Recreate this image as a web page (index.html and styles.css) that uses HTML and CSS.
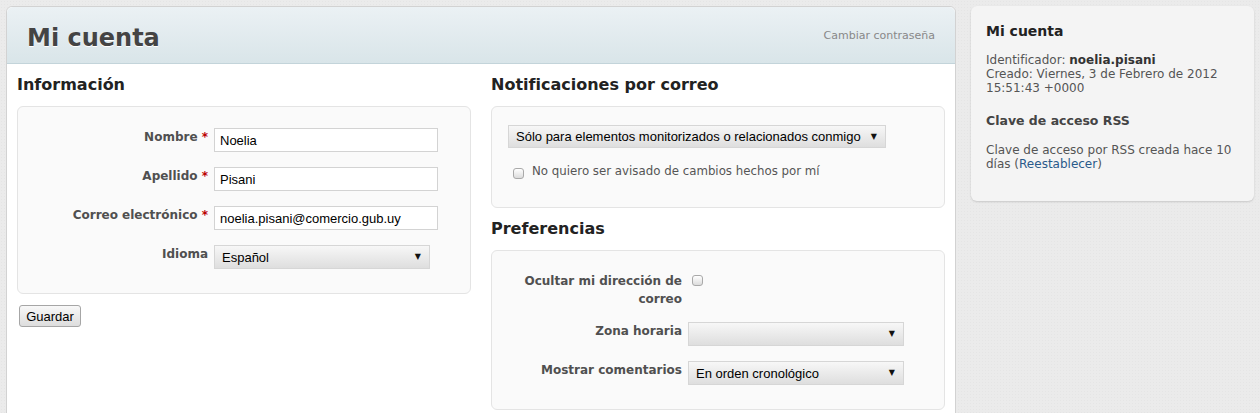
FILE: index.html
```html
<!DOCTYPE html>
<html lang="es">
<head>
    <meta charset="UTF-8">
    <meta name="viewport" content="width=device-width, initial-scale=1.0">
    <title>Mi cuenta</title>
    <link rel="stylesheet" href="styles.css">
</head>
<body>

<div class="page">
    <div class="main">
        <div class="main-header">
            <h2>Mi cuenta</h2>
            <a href="#" class="contextual">Cambiar contraseña</a>
        </div>

        <form class="account-form">
            <div class="col">
                <h3>Información</h3>
                <div class="box tabular">
                    <div class="row">
                        <label>Nombre <span class="required">*</span></label>
                        <input type="text" value="Noelia">
                    </div>
                    <div class="row">
                        <label>Apellido <span class="required">*</span></label>
                        <input type="text" value="Pisani">
                    </div>
                    <div class="row">
                        <label>Correo electrónico <span class="required">*</span></label>
                        <input type="text" value="noelia.pisani@comercio.gub.uy">
                    </div>
                    <div class="row">
                        <label>Idioma</label>
                        <span class="select">
                            <select>
                                <option>Español</option>
                            </select>
                        </span>
                    </div>
                </div>
                <button type="button" class="save-btn">Guardar</button>
            </div>

            <div class="col">
                <h3>Notificaciones por correo</h3>
                <div class="box notify">
                    <span class="select wide">
                        <select>
                            <option>Sólo para elementos monitorizados o relacionados conmigo</option>
                        </select>
                    </span>
                    <label class="check">
                        <input type="checkbox"> No quiero ser avisado de cambios hechos por mí
                    </label>
                </div>

                <h3>Preferencias</h3>
                <div class="box tabular">
                    <div class="row tall">
                        <label>Ocultar mi dirección de correo</label>
                        <input type="checkbox">
                    </div>
                    <div class="row">
                        <label>Zona horaria</label>
                        <span class="select">
                            <select>
                                <option></option>
                            </select>
                        </span>
                    </div>
                    <div class="row">
                        <label>Mostrar comentarios</label>
                        <span class="select">
                            <select>
                                <option>En orden cronológico</option>
                            </select>
                        </span>
                    </div>
                </div>
            </div>
        </form>
    </div>

    <div class="sidebar">
        <h3>Mi cuenta</h3>
        <p>Identificador: <strong>noelia.pisani</strong><br>
           Creado: Viernes, 3 de Febrero de 2012 15:51:43 +0000</p>

        <h4>Clave de acceso RSS</h4>
        <p>Clave de acceso por RSS creada hace 10 días (<a href="#">Reestablecer</a>)</p>
    </div>
</div>

</body>
</html>
```

FILE: styles.css
```css
body {
    margin: 0;
    font-family: 'DejaVu Sans', Verdana, sans-serif;
    font-size: 12px;
    color: #555;
    background-color: #ebebeb;
    background-image: radial-gradient(rgba(0, 0, 0, 0.025) 1px, transparent 1px);
    background-size: 3px 3px;
    overflow: hidden;
}

.page {
    display: flex;
    align-items: flex-start;
    gap: 15px;
    padding: 6px;
}

.main {
    width: 948px;
    min-height: 430px;
    background: #fff;
    border: 1px solid #d2d2d2;
    border-radius: 6px 6px 0 0;
}

.main-header {
    display: flex;
    justify-content: space-between;
    align-items: flex-start;
    height: 40px;
    padding: 16px 20px 0;
    background: linear-gradient(#ebf1f4, #d9e5e9);
    border-bottom: 1px solid #c3d4da;
    border-radius: 6px 6px 0 0;
}

.main-header h2 {
    margin: 0;
    font-size: 24px;
    line-height: 30px;
    color: #444;
    text-shadow: 0 1px 0 #fff;
}

.contextual {
    margin-top: 6px;
    font-size: 11px;
    line-height: 14px;
    color: #888;
    text-decoration: none;
}

.account-form {
    display: grid;
    grid-template-columns: 454px 454px;
    column-gap: 20px;
    padding: 0 10px 20px;
}

h3 {
    margin: 11px 0 11px;
    font-size: 16px;
    line-height: 20px;
    color: #222;
}

.box {
    background: #fafafa;
    border: 1px solid #e4e4e4;
    border-radius: 6px;
}

.tabular {
    padding: 21px 0 24px;
}

.row {
    display: flex;
    align-items: flex-start;
    margin-bottom: 15px;
}

.row.tall {
    margin-bottom: 14px;
}

.row:last-child {
    margin-bottom: 0;
}

.row label {
    width: 190px;
    margin-right: 6px;
    text-align: right;
    font-weight: bold;
    line-height: 18px;
    color: #505050;
}

.required {
    color: #bb0000;
}

input[type="text"] {
    box-sizing: border-box;
    width: 224px;
    height: 24px;
    padding: 0 5px;
    border: 1px solid #d3d3d3;
    background: #fff;
    font-family: 'Liberation Sans', Arial, sans-serif;
    font-size: 13px;
    color: #000;
}

.select {
    position: relative;
    display: inline-block;
    width: 216px;
}

.select select {
    appearance: none;
    box-sizing: border-box;
    width: 100%;
    height: 24px;
    padding: 0 20px 0 7px;
    border: 1px solid #d6d6d6;
    border-radius: 0;
    background: linear-gradient(#f7f7f7, #dedede);
    font-family: 'Liberation Sans', Arial, sans-serif;
    font-size: 13px;
    color: #000;
}

.select::after {
    content: "▼";
    position: absolute;
    right: 9px;
    top: 7px;
    font-size: 8px;
    line-height: 9px;
    color: #111;
    pointer-events: none;
}

.select.wide {
    width: 378px;
}

.select.wide select {
    height: 23px;
}

input[type="checkbox"] {
    appearance: none;
    width: 11px;
    height: 11px;
    margin: 3px 3px 0 4px;
    border: 1px solid #a9a9a9;
    border-radius: 3px;
    background: linear-gradient(#fff, #dcdcdc);
}

.notify {
    padding: 18px 16px 27px;
}

.notify .check {
    display: flex;
    align-items: flex-start;
    margin-top: 14px;
    line-height: 18px;
    font-size: 11.8px;
    color: #555;
}

.notify .check input {
    margin: 6px 8px 0 5px;
}

.save-btn {
    margin: 11px 0 0 2px;
    width: 62px;
    height: 22px;
    padding: 0;
    border: 1px solid #a6a6a6;
    border-radius: 3px;
    background: linear-gradient(#f8f8f8, #dddddd);
    font-family: 'Liberation Sans', Arial, sans-serif;
    font-size: 13px;
    color: #000;
}

.sidebar {
    width: 255px;
    padding: 16px 15px 30px;
    background: #f4f4f4;
    border-radius: 6px;
    box-shadow: 0 1px 2px rgba(0, 0, 0, 0.15);
}

.sidebar h3 {
    margin: 0 0 13px;
    font-size: 14px;
    line-height: 18px;
    color: #222;
}

.sidebar h4 {
    margin: 18px 0 14px;
    font-size: 12.5px;
    line-height: 16px;
    color: #444;
}

.sidebar p {
    margin: 0;
    line-height: 14px;
}

.sidebar strong {
    color: #333;
}

.sidebar a {
    color: #2a5a8a;
    text-decoration: none;
}
```
